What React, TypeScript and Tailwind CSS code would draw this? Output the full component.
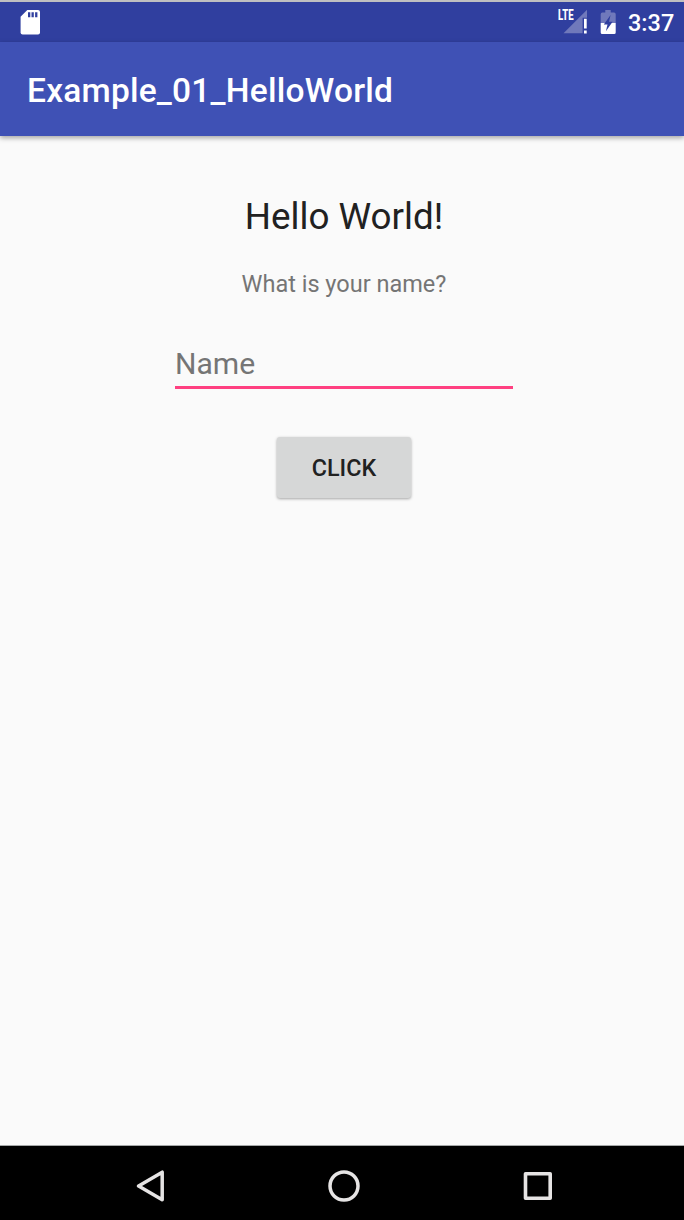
function StatusBar() {
  return (
    <header className="flex h-[42px] shrink-0 items-start border-t-2 border-[#bfbfc1] bg-[#303f9f] pl-5 text-white">
      <svg className="mt-2 h-[25px] w-5" viewBox="0 0 20 25" fill="none">
        <path d="M7.3 0H18a2 2 0 0 1 2 2v20.4a2 2 0 0 1-2 2H2.6a2 2 0 0 1-2-2V6.7Z" fill="#fff" />
        <path d="M8 2.3h2.3v4.9H8zM11.5 2.3h2.3v4.9h-2.3zM15.1 2.3h2.3v4.9h-2.3z" fill="#303f9f" />
      </svg>
      <div className="ml-auto flex items-start">
        <div className="relative h-[34px] w-[31px]">
          <svg className="h-[34px] w-[31px]" viewBox="0 2 31 34">
            <path d="M30 9.7v8.1h-4.4v15.5H6.5Z" fill="#7079bb" />
            <path d="M27 18.8h2.7v9.6H27zM27 30.6h2.7v2.8H27z" fill="#fff" />
          </svg>
          <span className="absolute left-[0.5px] top-[7px] origin-left scale-x-[0.66] text-[14.5px] font-extrabold leading-[14px]">LTE</span>
        </div>
        <svg className="ml-3 h-[34px] w-[17px]" viewBox="0 2 17 34">
          <path d="M5.3 10h5.4v2.5H14a1.7 1.7 0 0 1 1.7 1.7V23H.7v-8.8a1.7 1.7 0 0 1 1.7-1.7h2.9Z" fill="#7079bb" />
          <path d="M.7 23h15v9.4a1.5 1.5 0 0 1-1.5 1.5h-12a1.5 1.5 0 0 1-1.5-1.5Z" fill="#fff" />
          <path d="M10.6 15 3.8 24.6h3.7L5.9 31.3 12.6 21.8H9Z" fill="#303f9f" />
        </svg>
        <time className="ml-[11px] mt-[7px] w-[56px] whitespace-nowrap text-[23.5px] font-medium leading-7">3:37</time>
      </div>
    </header>
  );
}

function NavigationBar() {
  return (
    <nav className="flex h-[75px] shrink-0 items-center justify-between border-t border-[#a5a8a8] bg-black pl-[136px] pr-[131px] pt-[6px]">
      <button aria-label="Back">
        <svg className="h-8 w-7" viewBox="0 0 28 32" fill="none" stroke="#e6e4e4" strokeWidth="3.5" strokeLinejoin="round">
          <path d="M26.2 2.2v27.6L2.6 16Z" />
        </svg>
      </button>
      <button aria-label="Home">
        <svg className="h-8 w-8" viewBox="0 0 32 32" fill="none" stroke="#e6e4e4" strokeWidth="3.5">
          <circle cx="16" cy="16" r="14" />
        </svg>
      </button>
      <button aria-label="Recent apps">
        <svg className="h-8 w-[30px]" viewBox="0 0 30 32" fill="none" stroke="#e6e4e4" strokeWidth="3.6" strokeLinejoin="round">
          <path d="M2.5 3.7h24.7v24.6H2.5Z" />
        </svg>
      </button>
    </nav>
  );
}

export default function App() {
  return (
    <div className="flex h-[1220px] w-[684px] flex-col overflow-hidden bg-[#fafafa] font-['Roboto',sans-serif]">
      <StatusBar />
      <div className="z-10 flex h-[94px] shrink-0 items-center bg-[#3f51b5] pl-[27px] pt-[3px] shadow-[0_2px_5px_rgba(0,0,0,0.35)]">
        <h1 className="whitespace-nowrap text-[33.5px] font-medium leading-10 tracking-[0.22px] text-white">Example_01_HelloWorld</h1>
      </div>
      <main className="flex grow flex-col items-center pl-1 pt-[59px]">
        <h2 className="whitespace-nowrap text-[36.8px] leading-[44px] text-[#212121]">Hello World!</h2>
        <p className="mt-[30px] whitespace-nowrap text-[23.5px] leading-[30px] text-[#757575]">What is your name?</p>
        <input
          className="mt-[44px] h-[46px] w-[338px] border-b-[3px] border-[#ff4081] bg-transparent pb-[3px] text-[30.1px] leading-[38px] text-[#212121] outline-none placeholder:text-[#757575]"
          placeholder="Name"
          aria-label="Name"
        />
        <button className="mr-px mt-[47.5px] h-[61.5px] w-[134px] rounded-[3px] bg-[#d6d7d7] pl-px pt-px text-[23.3px] font-medium leading-7 text-[#212121] shadow-[0_1px_3px_rgba(0,0,0,0.35)]">
          CLICK
        </button>
      </main>
      <NavigationBar />
    </div>
  );
}
